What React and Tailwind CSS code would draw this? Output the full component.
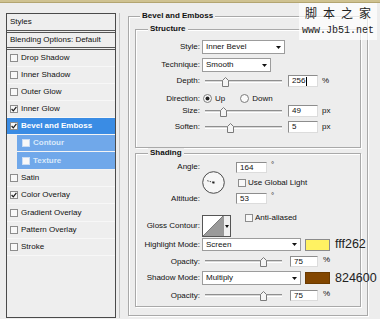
import React from "react";

const Check = () => (
  <svg width="6" height="6" viewBox="0 0 6 6">
    <path d="M0.6 3 L2.3 4.8 L5.4 0.8" fill="none" stroke="#1a1a1a" strokeWidth="1.2" />
  </svg>
);

function Checkbox({ checked, className = "" }) {
  return (
    <div className={`w-[8px] h-[8px] border border-[#8d8d8d] bg-[#f8f8f8] flex items-center justify-center shrink-0 ${className}`}>
      {checked && <Check />}
    </div>
  );
}

const Arrow = () => (
  <svg width="5" height="3" viewBox="0 0 5 3">
    <path d="M0 0H5L2.5 3Z" fill="#111" />
  </svg>
);

function Dropdown({ w, text }) {
  return (
    <div className={`${w} h-full ml-[2px] bg-white border border-[#9c9c9c] flex items-center justify-between pl-[3px] pr-[3px] shrink-0`}>
      <span>{text}</span>
      <Arrow />
    </div>
  );
}

const Thumb = ({ className }) => (
  <svg className={className} width="7" height="10" viewBox="0 0 7 10">
    <path d="M0.5 9.5 V3.5 L3.5 0.5 L6.5 3.5 V9.5 Z" fill="#f5f5f5" stroke="#7a7a7a" />
  </svg>
);

function Slider({ left }) {
  return (
    <div className="relative ml-[5px] w-[77px] h-[3px] border-t border-[#8f8f8f] border-b border-b-white bg-[#d9d9d9] shrink-0">
      <Thumb className={`absolute -top-[4px] ${left}`} />
    </div>
  );
}

function NumInput({ value, cursor, className = "ml-[6px] w-[30px]" }) {
  return (
    <div className={`${className} h-full bg-white border border-[#8d8d8d] border-r-[#dcdcdc] border-b-[#dcdcdc] flex items-center pl-[3px] shrink-0`}>
      {value}
      {cursor && <span className="w-px h-[9px] bg-black ml-[1px]" />}
    </div>
  );
}

const Radio = ({ on }) => (
  <svg width="9" height="9" viewBox="0 0 9 9" className="shrink-0">
    <circle cx="4.5" cy="4.5" r="4" fill="#fafafa" stroke="#7c7c7c" />
    {on && <circle cx="4.5" cy="4.5" r="2" fill="#222" />}
  </svg>
);

function Row({ label, className, children }) {
  return (
    <div className={`flex items-center ${className}`}>
      <div className="w-[64px] text-right shrink-0">{label}</div>
      {children}
    </div>
  );
}

const items = [
  ["Drop Shadow", false, 17, ""],
  ["Inner Shadow", false, 17, ""],
  ["Outer Glow", false, 17, ""],
  ["Inner Glow", true, 17, ""],
  ["Bevel and Emboss", true, 17, "sel"],
  ["Contour", false, 17, "sub"],
  ["Texture", false, 18, "sub"],
  ["Satin", false, 17, ""],
  ["Color Overlay", true, 17, ""],
  ["Gradient Overlay", false, 18, ""],
  ["Pattern Overlay", false, 17, ""],
  ["Stroke", false, 17, ""],
];

function LeftPanel() {
  return (
    <div className="mt-[10px] w-[110px] h-[305px] border border-[#4a4a4a] bg-[#eeeeee] flex flex-col shrink-0">
      <div className="h-[19px] flex items-center pl-[3px] border-b-[3px] border-double border-[#555]">Styles</div>
      <div className="h-[17px] flex items-center pl-[3px] border-b-[3px] border-double border-[#555]">Blending Options: Default</div>
      {items.map(([name, checked, h, kind]) => {
        const hc = h === 18 ? "h-[18px]" : "h-[17px]";
        if (kind === "sel") {
          return (
            <div key={name} className={`${hc} flex items-center pl-[3px] bg-[#3a8ce4] text-white font-bold border-b border-[#f4f4f4]`}>
              <Checkbox checked={checked} />
              <span className="ml-[3px]">{name}</span>
            </div>
          );
        }
        if (kind === "sub") {
          return (
            <div key={name} className={`${hc} flex items-center ml-[10px] pl-[5px] bg-[#70a8ea] text-[#d9e8fa] font-bold border-b border-[#f4f4f4]`}>
              <Checkbox checked={checked} className="border-[#c9dcf4] bg-[#e3eefb]" />
              <span className="ml-[3px]">{name}</span>
            </div>
          );
        }
        return (
          <div key={name} className={`${hc} flex items-center pl-[3px] border-b border-[#f7f7f7]`}>
            <Checkbox checked={checked} />
            <span className="ml-[3px]">{name}</span>
          </div>
        );
      })}
    </div>
  );
}

const boxCls = "border border-[#a9a9a9] shadow-[inset_1px_1px_0_#fff,1px_1px_0_#fff]";

function RightPanel() {
  return (
    <div className={`mt-[13px] ml-[8px] w-[240px] h-[300px] ${boxCls} flex flex-col shrink-0`}>
      <div className="-mt-[6px] ml-[11px] px-[2px] w-fit h-[10px] leading-[10px] bg-[#ededed] font-bold text-[#111]">Bevel and Emboss</div>

      {/* Structure */}
      <div className={`mt-[8px] ml-[6px] w-[226px] h-[119px] ${boxCls} flex flex-col`}>
        <div className="-mt-[6px] ml-[12px] px-[2px] w-fit h-[10px] leading-[10px] bg-[#ededed] font-bold">Structure</div>
        <Row label="Style:" className="mt-[6px] h-[14px]">
          <Dropdown w="w-[83px]" text="Inner Bevel" />
        </Row>
        <Row label="Technique:" className="mt-[4px] h-[14px]">
          <Dropdown w="w-[69px]" text="Smooth" />
        </Row>
        <Row label="Depth:" className="mt-[3px] h-[12px]">
          <Slider left="left-[17px]" />
          <NumInput value="256" cursor />
          <span className="ml-[4px]">%</span>
        </Row>
        <Row label="Direction:" className="mt-[6px] h-[11px]">
          <div className="ml-[3px] flex items-center">
            <Radio on />
            <span className="ml-[3px]">Up</span>
          </div>
          <div className="ml-[15px] flex items-center">
            <Radio />
            <span className="ml-[3px]">Down</span>
          </div>
        </Row>
        <Row label="Size:" className="mt-[1px] h-[12px]">
          <Slider left="left-[15px]" />
          <NumInput value="49" />
          <span className="ml-[4px]">px</span>
        </Row>
        <Row label="Soften:" className="mt-[4px] h-[12px]">
          <Slider left="left-[22px]" />
          <NumInput value="5" />
          <span className="ml-[4px]">px</span>
        </Row>
      </div>

      {/* Shading */}
      <div className={`mt-[5px] ml-[6px] w-[226px] h-[154px] ${boxCls} flex flex-col`}>
        <div className="-mt-[6px] ml-[12px] px-[2px] w-fit h-[10px] leading-[10px] bg-[#ededed] font-bold">Shading</div>

        <div className="mt-[4px] h-[42px] flex">
          <div className="w-[64px] shrink-0 flex flex-col justify-between text-right">
            <div className="leading-[10px]">Angle:</div>
            <div className="leading-[10px]">Altitude:</div>
          </div>
          <svg width="23" height="23" viewBox="0 0 23 23" className="ml-[2px] mt-[9px] shrink-0">
            <circle cx="11.5" cy="11.5" r="10.8" fill="#f6f6f6" stroke="#4a4a4a" strokeWidth="1" />
            <line x1="11.5" y1="11.5" x2="5" y2="9.6" stroke="#333" strokeWidth="0.9" strokeDasharray="1.5 1" />
            <rect x="10.5" y="10.5" width="2" height="2" fill="#222" />
          </svg>
          <div className="ml-[11px] flex flex-col">
            <div className="h-[11px] flex">
              <NumInput value="164" className="w-[31px]" />
              <span className="ml-[4px] -mt-[1px]">°</span>
            </div>
            <div className="mt-[5px] h-[9px] flex items-center">
              <Checkbox className="ml-[2px]" />
              <span className="ml-[2px]">Use Global Light</span>
            </div>
            <div className="mt-[6px] h-[11px] flex">
              <NumInput value="53" className="w-[31px]" />
              <span className="ml-[4px] -mt-[1px]">°</span>
            </div>
          </div>
        </div>

        <div className="mt-[11px] h-[22px] flex items-start">
          <div className="w-[64px] shrink-0 text-right self-center">Gloss Contour:</div>
          <div className="ml-[2px] w-[29px] h-[22px] border border-[#555] bg-white flex shrink-0">
            <svg width="20" height="20" viewBox="0 0 20 20" className="shrink-0">
              <polygon points="0,20 20,0 20,20" fill="#9a9a9a" />
              <line x1="0" y1="20" x2="20" y2="0" stroke="#666" strokeWidth="0.8" />
            </svg>
            <div className="flex-1 border-l border-[#999] bg-[#f0f0f0] flex items-center justify-center">
              <svg width="4" height="3" viewBox="0 0 4 3"><path d="M0 0H4L2 3Z" fill="#111" /></svg>
            </div>
          </div>
          <div className="ml-[14px] -mt-[1px] flex items-center">
            <Checkbox />
            <span className="ml-[2px]">Anti-aliased</span>
          </div>
        </div>

        <Row label="Highlight Mode:" className="mt-[1px] h-[13px]">
          <Dropdown w="w-[99px]" text="Screen" />
          <div className="ml-[4px] w-[25px] h-[12px] bg-[#fff262] border border-[#8b8b8b] shrink-0" />
          <span className="ml-[5px] text-[12.5px] text-[#222]">fff262</span>
        </Row>
        <Row label="Opacity:" className="mt-[5px] h-[11px]">
          <Slider left="left-[55px]" />
          <NumInput value="75" className="ml-[8px] w-[28px]" />
          <span className="ml-[5px] -mt-[3px]">%</span>
        </Row>
        <Row label="Shadow Mode:" className="mt-[4px] h-[14px]">
          <Dropdown w="w-[99px]" text="Multiply" />
          <div className="ml-[4px] w-[25px] h-[12px] bg-[#824600] border border-[#6a3a00] shrink-0" />
          <span className="ml-[5px] text-[12.5px] text-[#222]">824600</span>
        </Row>
        <Row label="Opacity:" className="mt-[5px] h-[11px]">
          <Slider left="left-[55px]" />
          <NumInput value="75" className="ml-[8px] w-[28px]" />
          <span className="ml-[5px] -mt-[3px]">%</span>
        </Row>
      </div>
    </div>
  );
}

export default function App() {
  return (
    <div className="w-[380px] h-[319px] bg-[#ededed] overflow-hidden relative font-['Liberation_Sans',Arial,sans-serif] text-[8px] text-[#111] leading-none">
      <div className="h-[3px] bg-[#cfc291] border-b border-[#b3a571]" />
      <div className="flex items-start pl-[6px]">
        <LeftPanel />
        <div className="mt-[10px] ml-[3px] w-px h-[305px] bg-[#c4c4c4] shrink-0" />
        <RightPanel />
      </div>
      <div className="absolute left-[299px] top-[3px] w-[78px] h-[37px] bg-white/70 flex flex-col items-center">
        <div className="mt-[2px] text-[12px] leading-[16px] tracking-[6px] pl-[6px] text-[#222] font-['Noto_Sans_CJK_SC',sans-serif]">脚本之家</div>
        <div className="mt-[4px] text-[10px] leading-[12px] text-[#222] font-['Liberation_Mono',monospace]">www.Jb51.net</div>
      </div>
    </div>
  );
}
